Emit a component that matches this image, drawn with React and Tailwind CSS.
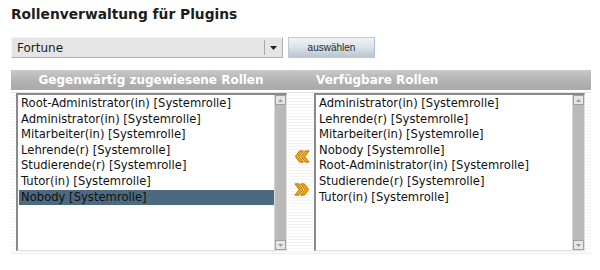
import React from "react";

const assigned = [
  "Root-Administrator(in) [Systemrolle]",
  "Administrator(in) [Systemrolle]",
  "Mitarbeiter(in) [Systemrolle]",
  "Lehrende(r) [Systemrolle]",
  "Studierende(r) [Systemrolle]",
  "Tutor(in) [Systemrolle]",
  "Nobody [Systemrolle]",
];
const available = [
  "Administrator(in) [Systemrolle]",
  "Lehrende(r) [Systemrolle]",
  "Mitarbeiter(in) [Systemrolle]",
  "Nobody [Systemrolle]",
  "Root-Administrator(in) [Systemrolle]",
  "Studierende(r) [Systemrolle]",
  "Tutor(in) [Systemrolle]",
];

function Scrollbar() {
  return (
    <div className="flex w-[12px] flex-col bg-[#b9b9b9] border-l border-[#d8d8d8]">
      <div className="flex h-[10px] items-center justify-center bg-[#e6e6e6] border border-[#a0a0a0]">
        <svg width="5" height="3" viewBox="0 0 5 3"><path d="M0 3 L2.5 0 L5 3Z" fill="#9a9a9a" /></svg>
      </div>
      <div className="flex-1" />
      <div className="flex h-[10px] items-center justify-center bg-[#e6e6e6] border border-[#a0a0a0]">
        <svg width="5" height="3" viewBox="0 0 5 3"><path d="M0 0 L2.5 3 L5 0Z" fill="#9a9a9a" /></svg>
      </div>
    </div>
  );
}

function ListBox({ items, selected }) {
  return (
    <div className="flex h-[158px] w-[271px] bg-white border-t-2 border-l-2 border-t-[#8a8a8a] border-l-[#8a8a8a] border-r border-b border-r-[#e0e0e0] border-b-[#e0e0e0]">
      <div className="flex-1 pt-[1px] pl-[1px]">
        {items.map((t) => (
          <div
            key={t}
            className={
              "h-[15.6px] pl-[2px] text-[11.6px] leading-[15.6px] whitespace-nowrap text-[#111] " +
              (t === selected ? "bg-[#4b6a80]" : "")
            }
          >
            {t}
          </div>
        ))}
      </div>
      <Scrollbar />
    </div>
  );
}

function Chevrons({ dir }) {
  const d =
    dir === "left"
      ? "M6 0.5 L10 0.5 L5.5 6.5 L10 12.5 L6 12.5 L1.5 6.5Z M12 0.5 L16 0.5 L11.5 6.5 L16 12.5 L12 12.5 L7.5 6.5Z"
      : "M1 0.5 L5 0.5 L9.5 6.5 L5 12.5 L1 12.5 L5.5 6.5Z M7 0.5 L11 0.5 L15.5 6.5 L11 12.5 L7 12.5 L11.5 6.5Z";
  return (
    <svg width="16" height="13" viewBox="0 0 17 13">
      <path d={d} fill="#f5a800" stroke="#a86400" strokeWidth="0.9" strokeLinejoin="round" />
    </svg>
  );
}

export default function App() {
  return (
    <div className="relative h-[270px] w-[600px] overflow-hidden bg-white font-['DejaVu_Sans',sans-serif]">
      <h1 className="pl-[11px] pt-[4px] text-[13.8px] font-bold leading-[20px] text-[#1c1c1c]">
        Rollenverwaltung für Plugins
      </h1>
      <div className="ml-[11px] mt-[13px] flex h-[21px]">
        <div className="flex w-[272px] items-center border border-t-[#f4f4f4] border-l-[#f4f4f4] border-r-[#b0b0b0] border-b-[#b0b0b0] bg-[#e5e5e5]">
          <span className="flex-1 pl-[5px] text-[12px] text-[#1c1c1c]">Fortune</span>
          <div className="flex h-[15px] w-[18px] items-center justify-center border-l border-[#a8a8a8]">
            <svg width="7" height="4" viewBox="0 0 7 4"><path d="M0 0 L7 0 L3.5 4Z" fill="#222" /></svg>
          </div>
        </div>
        <button className="ml-[5px] h-[21px] w-[87px] border border-[#c4c4dc] border-r-[#b8b8e8] bg-[linear-gradient(#f0f3f6,#dde4ea_45%,#b9c5d0)] font-['Liberation_Sans',sans-serif] text-[10px] text-[#2a2a2a]">
          auswählen
        </button>
      </div>
      <div className="ml-[11px] mt-[12px] w-[580px]">
        <div className="flex h-[20px] items-center bg-[linear-gradient(#c9c9c9,#b4b4b4_50%,#a9a9a9)] text-[12px] font-bold text-white">
          <div className="w-[280px] text-center">Gegenwärtig zugewiesene Rollen</div>
          <div className="pl-[25px]">Verfügbare Rollen</div>
        </div>
        <div className="mt-[2px] h-[1px] bg-[#e4e4e4]" />
        <div className="flex h-[161px] pl-[5px] bg-[repeating-linear-gradient(#ffffff_0px,#ffffff_2px,#f4f4f4_2px,#f4f4f4_3px)] border-b border-[#ececec]">
          <ListBox items={assigned} selected="Nobody [Systemrolle]" />
          <div className="flex w-[27px] flex-col items-center pt-[57px]">
            <div className="ml-[3px]"><Chevrons dir="left" /></div>
            <div className="ml-[3px] mt-[20px]"><Chevrons dir="right" /></div>
          </div>
          <ListBox items={available} />
        </div>
      </div>
    </div>
  );
}
